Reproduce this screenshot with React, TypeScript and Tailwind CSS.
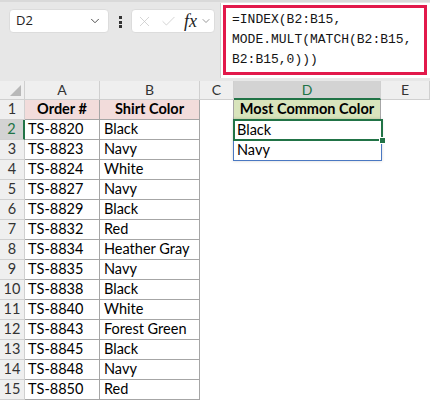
import { Check, ChevronDown, X } from 'lucide-react'

const ROWS: [string, string][] = [
  ['TS-8820', 'Black'],
  ['TS-8823', 'Navy'],
  ['TS-8824', 'White'],
  ['TS-8827', 'Navy'],
  ['TS-8829', 'Black'],
  ['TS-8832', 'Red'],
  ['TS-8834', 'Heather Gray'],
  ['TS-8835', 'Navy'],
  ['TS-8838', 'Black'],
  ['TS-8840', 'White'],
  ['TS-8843', 'Forest Green'],
  ['TS-8845', 'Black'],
  ['TS-8848', 'Navy'],
  ['TS-8850', 'Red'],
]

const SPILL = ['Black', 'Navy']

function FormulaBar() {
  return (
    <div className="flex h-[81px] border-t-2 border-[#d9d9d9] bg-[#e7e7e7] font-['Open_Sans',sans-serif]">
      <div className="ml-[9px] mt-[7px] flex h-[24px] w-[100px] shrink-0 items-center justify-between rounded-[4px] border border-[#dcdcdc] bg-white pl-[6px] pr-[6px] text-[13px] text-[#222]">
        <span>D2</span>
        <ChevronDown size={14} strokeWidth={1.6} className="text-[#444]" />
      </div>
      <div className="ml-[10px] mt-[14px] flex h-[12px] w-[3px] shrink-0 flex-col justify-between">
        <span className="h-[3px] w-[3px] bg-[#333]" />
        <span className="h-[3px] w-[3px] bg-[#333]" />
        <span className="h-[3px] w-[3px] bg-[#333]" />
      </div>
      <div className="ml-[9px] mt-[7px] flex h-[24px] w-[84px] shrink-0 items-center rounded-[4px] border border-[#dcdcdc] bg-white pl-[4px]">
        <X size={17} strokeWidth={1} className="shrink-0 text-[#c4c4c4]" />
        <Check size={17} strokeWidth={1} className="ml-[7px] shrink-0 text-[#c4c4c4]" />
        <span className="ml-[7px] font-['Liberation_Serif',serif] text-[18px] italic leading-none text-[#222]">fx</span>
        <ChevronDown size={12} strokeWidth={1.5} className="ml-[3px] shrink-0 text-[#777]" />
      </div>
      <div className="ml-[5px] mt-[1px] h-[75px] w-[211px] shrink-0 border-l border-[#d0d0d0] bg-white pl-[2px] pt-[2px]">
        <div className="h-[70px] w-[204px] border-[3px] border-[#e2194b] pl-[6px] pt-[2px] font-['Liberation_Mono',monospace] text-[13px] leading-[20px] text-[#141414]">
          <div>=INDEX(B2:B15,</div>
          <div>MODE.MULT(MATCH(B2:B15,</div>
          <div>B2:B15,0)))</div>
        </div>
      </div>
    </div>
  )
}

function ColumnHeaders() {
  const cols: { label: string; w: string; active?: boolean }[] = [
    { label: 'A', w: 'w-[75px]' },
    { label: 'B', w: 'w-[100px]' },
    { label: 'C', w: 'w-[34px]' },
    { label: 'D', w: 'w-[147px]', active: true },
    { label: 'E', w: 'flex-1' },
  ]
  return (
    <div className="flex h-[19px] text-[14px] leading-none">
      <div className="relative h-[19px] w-[25px] border-b border-r border-[#d0d0d0] bg-[#efefef]">
        <svg className="absolute bottom-[3px] right-[3px]" width="11" height="11" viewBox="0 0 11 11">
          <polygon points="11,0 11,11 0,11" fill="#b8b8b8" />
        </svg>
      </div>
      {cols.map((c) =>
        c.active ? (
          <div
            key={c.label}
            className={`${c.w} flex items-center justify-center border-b-2 border-r border-b-[#217346] border-r-[#d0d0d0] bg-[#d3d3d3] text-[#217346]`}
          >
            {c.label}
          </div>
        ) : (
          <div
            key={c.label}
            className={`${c.w} flex items-center justify-center border-b border-r border-[#d0d0d0] bg-[#efefef] text-[#333]`}
          >
            {c.label}
          </div>
        ),
      )}
    </div>
  )
}

function RowHeader({ n }: { n: number }) {
  if (n === 2) {
    return (
      <div className="flex h-[20px] w-[25px] items-center justify-center border-b border-r-2 border-b-[#d0d0d0] border-r-[#217346] bg-[#d3d3d3] text-[#217346]">
        {n}
      </div>
    )
  }
  return (
    <div className="flex h-[20px] w-[25px] items-center justify-center border-b border-r border-[#d0d0d0] bg-[#efefef] text-[#333]">
      {n}
    </div>
  )
}

function Sheet() {
  return (
    <div className="relative font-['Lato',sans-serif] text-[14.5px]">
      <ColumnHeaders />
      <div className="flex h-[20px] leading-none">
        <RowHeader n={1} />
        <div className="flex w-[75px] items-center justify-center border-b border-r border-[#a6a6a6] bg-[#f2dcdb] font-bold">
          Order #
        </div>
        <div className="flex w-[100px] items-center justify-center border-b border-r border-[#a6a6a6] bg-[#f2dcdb] font-bold">
          Shirt Color
        </div>
        <div className="w-[33px]" />
        <div className="flex w-[148px] items-center justify-center border-b border-l border-r border-[#a6a6a6] bg-[#d8e4bc] font-bold">
          Most Common Color
        </div>
        <div className="flex-1" />
      </div>
      {ROWS.map(([order, color], i) => (
        <div key={order} className="flex h-[20px] leading-none">
          <RowHeader n={i + 2} />
          <div className="flex w-[75px] items-center border-b border-r border-[#a6a6a6] pl-[3px]">{order}</div>
          <div className="flex w-[100px] items-center border-b border-r border-[#a6a6a6] pl-[4px]">{color}</div>
          <div className="w-[33px]" />
          <div className="flex w-[148px] items-center pl-[4px]">{SPILL[i] ?? ''}</div>
          <div className="flex-1" />
        </div>
      ))}
      <div className="pointer-events-none absolute left-[233px] top-[38px] h-[42px] w-[149px] border border-[#4a78c2] shadow-[0_0_3px_rgba(0,0,0,0.18)]" />
      <div className="pointer-events-none absolute left-[233px] top-[38px] h-[22px] w-[150px] border-2 border-[#217346]" />
      <div className="pointer-events-none absolute left-[379px] top-[56px] h-[7px] w-[7px] border border-white bg-[#217346]" />
    </div>
  )
}

export default function App() {
  return (
    <div className="h-[402px] w-[430px] overflow-hidden bg-white text-black">
      <FormulaBar />
      <Sheet />
    </div>
  )
}
